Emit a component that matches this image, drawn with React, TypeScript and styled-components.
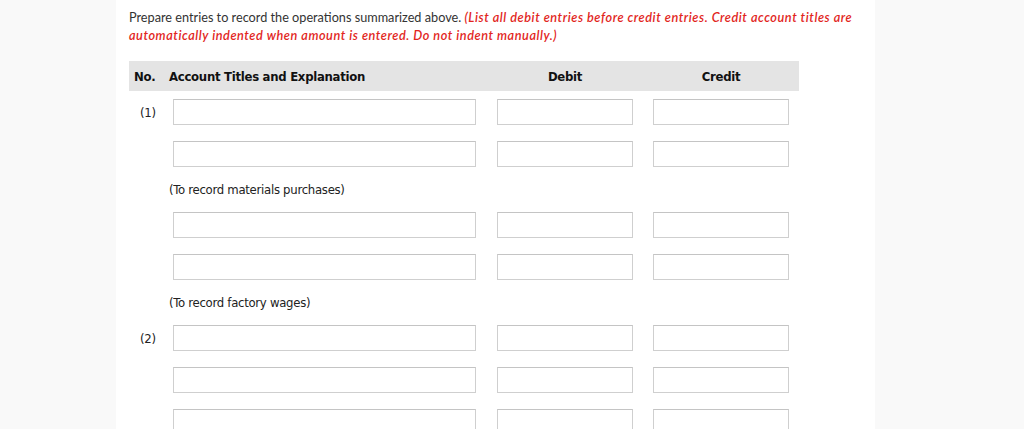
import styled, { createGlobalStyle } from "styled-components";

const GlobalStyle = createGlobalStyle`
  html, body {
    margin: 0;
    padding: 0;
    background: #f9f9f9;
  }
`;

const Panel = styled.div`
  margin-left: 116px;
  width: 759px;
  min-height: 100vh;
  box-sizing: border-box;
  background: #fff;
  padding: 8px 13px 0;
`;

const Instructions = styled.p`
  margin: 0;
  font-family: Lato, "Liberation Sans", sans-serif;
  font-size: 12.7px;
  line-height: 18px;
  color: #333;
`;

const Warning = styled.em`
  color: #e2261d;
  font-weight: 600;
  letter-spacing: 0.55px;
`;

const Table = styled.div`
  margin-top: 17px;
  width: 670px;
  font-family: "DejaVu Sans Condensed", "DejaVu Sans", sans-serif;
  letter-spacing: -0.28px;
  color: #222;
`;

const Grid = styled.div`
  display: grid;
  grid-template-columns: 40px 328px 156px 146px;
  align-items: center;
`;

const Header = styled(Grid)`
  height: 30px;
  background: #e4e4e4;
  font-size: 13px;
  font-weight: 700;
  color: #111;
`;

const HeadCell = styled.div<{ $center?: boolean; $first?: boolean }>`
  padding-left: ${(p) => (p.$first ? "5px" : "0")};
  width: ${(p) => (p.$center ? "136px" : "auto")};
  text-align: ${(p) => (p.$center ? "center" : "left")};
`;

const Body = styled.div`
  padding-top: 8px;
`;

const EntryRow = styled(Grid)`
  margin-bottom: 16px;
`;

const Num = styled.div`
  padding-left: 11px;
  font-size: 13px;
`;

const Field = styled.input<{ $wide?: boolean }>`
  box-sizing: border-box;
  display: block;
  height: 26px;
  width: ${(p) => (p.$wide ? "303px" : "136px")};
  margin-left: ${(p) => (p.$wide ? "4px" : "0")};
  border: 1px solid #cfcfcf;
  border-top-color: #c4c4c4;
  background: #fff;
  padding: 2px 4px;
  outline: none;
`;

const Note = styled.div`
  margin: 0 0 15px 40px;
  font-size: 13px;
  line-height: 14px;
`;

type Line = { num?: string } | { note: string };

const lines: Line[] = [
  { num: "(1)" },
  {},
  { note: "(To record materials purchases)" },
  {},
  {},
  { note: "(To record factory wages)" },
  { num: "(2)" },
  {},
  {},
];

export default function App() {
  return (
    <>
      <GlobalStyle />
      <Panel>
        <Instructions>
          Prepare entries to record the operations summarized above.{" "}
          <Warning>
            (List all debit entries before credit entries. Credit account titles are
            automatically indented when amount is entered. Do not indent manually.)
          </Warning>
        </Instructions>
        <Table>
          <Header>
            <HeadCell $first>No.</HeadCell>
            <HeadCell>Account Titles and Explanation</HeadCell>
            <HeadCell $center>Debit</HeadCell>
            <HeadCell $center>Credit</HeadCell>
          </Header>
          <Body>
            {lines.map((line, i) =>
              "note" in line ? (
                <Note key={i}>{line.note}</Note>
              ) : (
                <EntryRow key={i}>
                  <Num>{line.num}</Num>
                  <div>
                    <Field $wide type="text" />
                  </div>
                  <div>
                    <Field type="text" />
                  </div>
                  <div>
                    <Field type="text" />
                  </div>
                </EntryRow>
              )
            )}
          </Body>
        </Table>
      </Panel>
    </>
  );
}
